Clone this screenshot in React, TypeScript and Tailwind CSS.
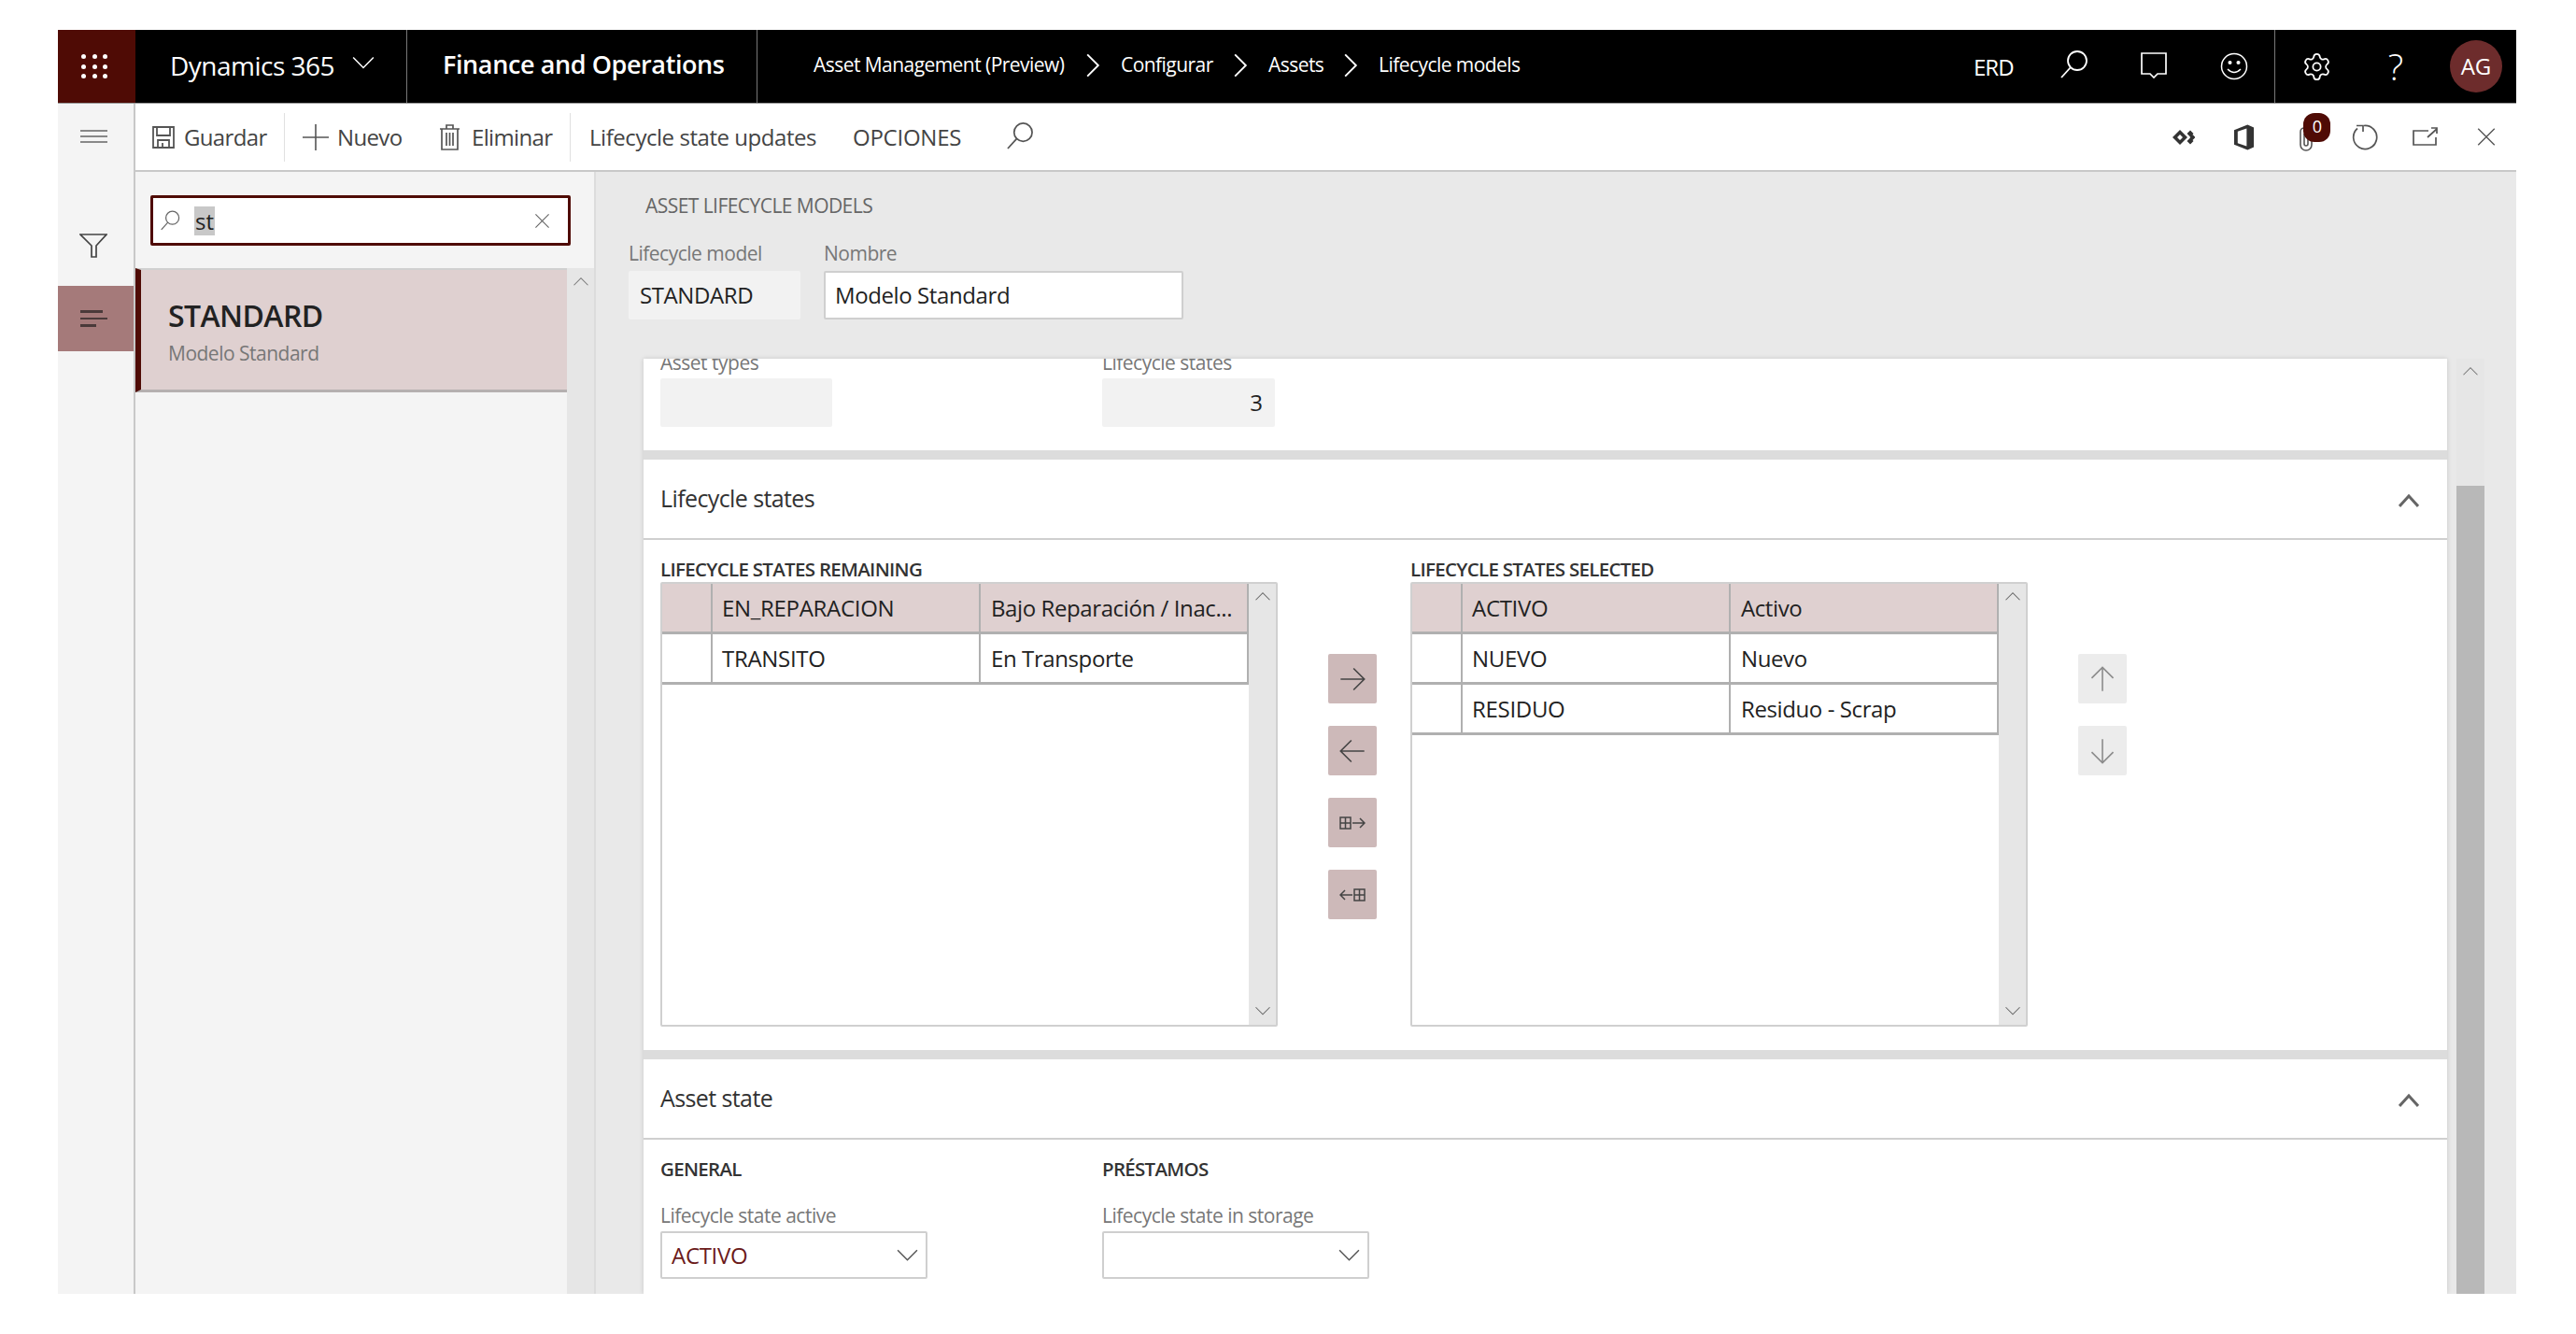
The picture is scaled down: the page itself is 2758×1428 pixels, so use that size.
import React from "react";
import { Settings } from "lucide-react";

type IconProps = { className?: string };

const line = { fill: "none", stroke: "currentColor", strokeWidth: 1.4 };

const Chevron = ({ dir, className, weight }: { dir: "up" | "down" | "right"; className?: string; weight?: number }) => {
  const d = dir === "up" ? "M2 15 L12 5 L22 15" : dir === "down" ? "M2 7 L12 17 L22 7" : "M7 2 L17 12 L7 22";
  return (
    <svg viewBox="0 0 24 24" className={className} {...line} strokeWidth={weight ?? 1.4}>
      <path d={d} />
    </svg>
  );
};

const SearchIcon = ({ className }: IconProps) => (
  <svg viewBox="0 0 30 30" className={className} {...line} strokeWidth={1.8}>
    <circle cx="18" cy="11" r="10" />
    <path d="M11 18 L1 29" />
  </svg>
);

const CloseIcon = ({ className }: IconProps) => (
  <svg viewBox="0 0 24 24" className={className} {...line} strokeWidth={1.6}>
    <path d="M2 2 L22 22 M22 2 L2 22" />
  </svg>
);

const Arrow = ({ dir, className }: { dir: "left" | "right" | "up" | "down"; className?: string }) => {
  const d = {
    right: "M2 13 H24 M14 3 L24 13 L14 23",
    left: "M24 13 H2 M12 3 L2 13 L12 23",
    up: "M13 24 V2 M3 12 L13 2 L23 12",
    down: "M13 2 V24 M3 14 L13 24 L23 14",
  }[dir];
  return (
    <svg viewBox="0 0 26 26" className={className} {...line} strokeWidth={1.4}>
      <path d={d} />
    </svg>
  );
};

const GridArrow = ({ flip }: { flip?: boolean }) => (
  <svg viewBox="0 0 28 16" className="w-[28px] h-[16px] text-[#444]" {...line} strokeWidth={1.5}>
    {flip ? (
      <>
        <path d="M14 8 H1 M6 3 L1 8 L6 13" />
        <path d="M16 2 H27 V14 H16 Z M21.5 2 V14 M16 8 H27" />
      </>
    ) : (
      <>
        <path d="M1 2 H12 V14 H1 Z M6.5 2 V14 M1 8 H12" />
        <path d="M14 8 H27 M22 3 L27 8 L22 13" />
      </>
    )}
  </svg>
);

const GridPanel = ({ title, rows, active }: { title: string; rows: string[][]; active: number }) => (
  <div className="w-[661px] flex flex-col pt-[18px]">
    <div className="h-[27px] text-[20.5px] leading-[27px] font-semibold text-[#333] tracking-[-0.7px] whitespace-nowrap">
      {title}
    </div>
    <div className="h-[476px] border-2 border-[#d0d0d0] rounded-[2px] flex">
      <div className="w-[628px] flex flex-col">
        {rows.map((row, i) => (
          <div
            key={row[0]}
            className={`h-[54px] flex border-b-[3px] border-[#b0b0b0] ${i === active ? "bg-[#dfd0d0]" : "bg-white"}`}
          >
            <div className="w-[54px] border-r-2 border-[#b0b0b0]" />
            <div className="w-[287px] border-r-2 border-[#b0b0b0] pl-[10px] pt-[1px] flex items-center text-[24px] text-[#222] tracking-[-0.3px]">
              {row[0]}
            </div>
            <div className="w-[287px] border-r-2 border-[#b0b0b0] pl-[11px] pt-[1px] flex items-center text-[24px] text-[#222] tracking-[-0.4px] whitespace-nowrap">
              {row[1]}
            </div>
          </div>
        ))}
      </div>
      <div className="flex-1 bg-[#e6e6e6] flex flex-col items-center justify-between py-[6px] text-[#666]">
        <Chevron dir="up" className="w-[18px] h-[18px]" />
        <Chevron dir="down" className="w-[18px] h-[18px]" />
      </div>
    </div>
  </div>
);

const ActionButton = ({ children, disabled }: { children: React.ReactNode; disabled?: boolean }) => (
  <div
    className={`w-[52px] h-[53px] rounded-[2px] flex items-center justify-center ${
      disabled ? "bg-[#ececec] text-[#8c8c8c]" : "bg-[#cdb9b9] text-[#444]"
    }`}
  >
    {children}
  </div>
);

const CardHeader = ({ title }: { title: string }) => (
  <div className="h-[86px] shrink-0 border-b-2 border-[#cfcfcf] pl-[18px] pr-[30px] flex items-center justify-between">
    <span className="text-[25px] font-medium text-[#333] tracking-[-0.6px]">{title}</span>
    <svg viewBox="0 0 22 15" className="w-[22px] h-[15px] text-[#666] mt-[2px]" {...line} strokeWidth={3}>
      <path d="M1 14 L11 3 L21 14" />
    </svg>
  </div>
);

const SelectField = ({ label, group, value }: { label: string; group: string; value?: string }) => (
  <div className="w-[286px]">
    <div className="h-[30px] text-[20.5px] leading-[30px] font-semibold text-[#333] tracking-[-0.7px] whitespace-nowrap">{group}</div>
    <div className="mt-[20px] h-[30px] text-[21px] leading-[30px] text-[#777] tracking-[-0.5px] whitespace-nowrap">{label}</div>
    <div className="mt-[2px] h-[51px] border-2 border-[#cfcfcf] rounded-[2px] bg-white pl-[10px] pr-[7px] flex items-center justify-between text-[24px] text-[#6b1a1a] tracking-[-0.3px]">
      <span>{value}</span>
      <Chevron dir="down" className="w-[25px] h-[25px] text-[#555]" />
    </div>
  </div>
);

export default function App() {
  return (
    <div className="min-h-screen bg-white pt-[32px] pl-[62px] font-['Open_Sans',sans-serif]">
      <div className="w-[2632px] h-[1353px] flex flex-col overflow-hidden">
        {/* top bar */}
        <header className="h-[79px] shrink-0 bg-black border-b border-[#999] text-white flex items-stretch">
          <div className="w-[83px] bg-[#4f0b05] grid grid-cols-[5px_5px_5px] gap-x-[6.5px] gap-y-[5.5px] pl-[25px] pt-[26px] content-start">
            {Array.from({ length: 9 }).map((_, i) => (
              <span key={i} className="w-[5px] h-[5px] rounded-full bg-white" />
            ))}
          </div>
          <div className="w-[291px] border-r border-[#777] pl-[37px] flex items-center">
            <span className="w-[177px] text-[28px] font-medium tracking-[-0.5px] whitespace-nowrap -mt-[3px]">Dynamics 365</span>
            <Chevron dir="down" className="ml-[17px] w-[26px] h-[26px] -mt-[8px]" />
          </div>
          <div className="w-[375px] border-r border-[#777] pl-[38px] flex items-center">
            <span className="text-[27px] font-semibold tracking-[-0.4px] whitespace-nowrap -mt-[3px]">Finance and Operations</span>
          </div>
          <nav className="pl-[60px] flex items-center text-[21px] tracking-[-0.55px] whitespace-nowrap">
            <span className="w-[269px] -mt-[2px]">Asset Management (Preview)</span>
            <Chevron dir="right" className="w-[28px] h-[28px] mx-[16px] -mt-[2px]" weight={1.6} />
            <span className="w-[98px] -mt-[2px]">Configurar</span>
            <Chevron dir="right" className="w-[28px] h-[28px] mx-[16px] -mt-[2px]" weight={1.6} />
            <span className="w-[58px] -mt-[2px]">Assets</span>
            <Chevron dir="right" className="w-[28px] h-[28px] mx-[16px] -mt-[2px]" weight={1.6} />
            <span className="-mt-[2px]">Lifecycle models</span>
          </nav>
          <div className="ml-auto flex items-center">
            <span className="w-[43px] text-[24px] tracking-[-1px] mt-[2px]">ERD</span>
            <SearchIcon className="w-[30px] h-[30px] ml-[50px] -mt-[5px]" />
            <svg viewBox="0 0 28 28" className="w-[28px] h-[28px] ml-[56px] -mt-[2px]" {...line} strokeWidth={1.7}>
              <path d="M1 1 H27 V23 H18 L14 27 L10 23 H1 Z" />
            </svg>
            <svg viewBox="0 0 30 30" className="w-[30px] h-[30px] ml-[57px]" {...line} strokeWidth={1.5}>
              <circle cx="15" cy="15" r="13.5" />
              <circle cx="10.5" cy="11" r="1.3" fill="currentColor" />
              <circle cx="19.5" cy="11" r="1.3" fill="currentColor" />
              <path d="M8 18 Q15 25 22 18" />
            </svg>
            <div className="w-[28px]" />
            <div className="w-[259px] h-full border-l border-[#777] pl-[28px] flex items-center">
              <Settings className="w-[33px] h-[33px]" strokeWidth={1.3} />
              <span className="w-[32px] ml-[52px] text-[39px] font-light text-center leading-none -mt-[2px]">?</span>
              <span className="ml-[42px] w-[56px] h-[56px] rounded-full bg-[#6d2c2c] flex items-center justify-center text-[24px]">AG</span>
            </div>
          </div>
        </header>

        <div className="flex-1 flex min-h-0">
          {/* nav rail */}
          <aside className="w-[83px] shrink-0 bg-[#f4f4f4] border-r-2 border-[#c8c8c8] flex flex-col">
            <div className="mt-[28px] ml-[24px] w-[29px] flex flex-col gap-[4px]">
              <span className="h-[2px] bg-[#888]" />
              <span className="h-[2px] bg-[#888]" />
              <span className="h-[2px] bg-[#888]" />
            </div>
            <svg viewBox="0 0 30 26" className="w-[30px] h-[26px] ml-[23px] mt-[97px] text-[#444]" {...line} strokeWidth={1.7}>
              <path d="M1 1 H29 L18 13 V25 H13 V13 Z" />
            </svg>
            <div className="mt-[30px] h-[70px] bg-[#a57a7a] pl-[24px] flex flex-col justify-center gap-[5px]">
              <span className="h-[2.5px] w-[24px] bg-[#4a3a3a]" />
              <span className="h-[2.5px] w-[29px] bg-[#4a3a3a]" />
              <span className="h-[2.5px] w-[17px] bg-[#4a3a3a]" />
            </div>
          </aside>

          <div className="flex-1 flex flex-col min-w-0">
            {/* action bar */}
            <div className="h-[73px] shrink-0 bg-white border-b-2 border-[#c8c8c8] flex items-center text-[24px] text-[#444] tracking-[-0.65px] whitespace-nowrap">
              <svg viewBox="0 0 24 24" className="w-[24px] h-[24px] ml-[18px] text-[#555]" {...line} strokeWidth={1.8}>
                <path d="M1 1 H23 V23 H1 Z M5 1 V10 H19 V1 M6 23 V15 H18 V23 M11 18 V23" />
              </svg>
              <span className="ml-[10px] w-[87px]">Guardar</span>
              <span className="ml-[20px] w-px h-[52px] bg-[#e0e0e0]" />
              <svg viewBox="0 0 28 28" className="w-[28px] h-[28px] ml-[19px] text-[#555]" {...line} strokeWidth={1.6}>
                <path d="M14 0 V28 M0 14 H28" />
              </svg>
              <span className="ml-[9px] w-[69px]">Nuevo</span>
              <svg viewBox="0 0 21 28" className="w-[21px] h-[28px] ml-[41px] text-[#555]" {...line} strokeWidth={1.7}>
                <path d="M0 5 H21 M7 5 V1 H14 V5 M2 5 V27 H19 V5 M7 9 V23 M10.5 9 V23 M14 9 V23" />
              </svg>
              <span className="ml-[13px] w-[85px]">Eliminar</span>
              <span className="ml-[20px] w-px h-[52px] bg-[#e0e0e0]" />
              <span className="ml-[20px] w-[243px] tracking-[-0.45px]">Lifecycle state updates</span>
              <span className="ml-[39px] w-[116px] tracking-[-0.25px]">OPCIONES</span>
              <SearchIcon className="w-[29px] h-[29px] ml-[49px] -mt-[2px] text-[#555]" />
              <div className="ml-auto flex items-center">
                <svg viewBox="0 0 24 16" className="w-[24px] h-[16px] text-[#333]" fill="currentColor">
                  <path fillRule="evenodd" d="M8 0 L16 8 L8 16 L0 8 Z M8 5 L5 8 L8 11 L11 8 Z" />
                  <path d="M19 0.5 L22.5 4 L19 7.5 L15.5 4 Z M19 8.5 L22.5 12 L19 15.5 L15.5 12 Z M21.5 5 L24.5 8 L21.5 11 L18.5 8 Z" />
                </svg>
                <svg viewBox="0 0 24 28" className="w-[23px] h-[28px] ml-[41px] text-[#333]" fill="currentColor">
                  <path fillRule="evenodd" d="M1 6 L16 0 L23 3 V25 L16 28 L1 22 Z M5 7.5 L15 4 V24 L5 20.5 Z" />
                </svg>
                <div className="relative ml-[47px] w-[16px] h-[27px] mt-[4px]">
                  <svg viewBox="0 0 16 27" className="w-[16px] h-[27px] text-[#555]" {...line} strokeWidth={1.6}>
                    <path d="M14 7 V20 A6 6 0 0 1 2 20 V6 A4 4 0 0 1 10 6 V19 A2 2 0 0 1 6 19 V8" />
                  </svg>
                  <span className="absolute -top-[14px] left-[5px] w-[29px] h-[31px] rounded-[12px] bg-[#4f0b05] text-white text-[18px] leading-[29px] text-center">
                    0
                  </span>
                </div>
                <svg viewBox="0 0 28 28" className="w-[28px] h-[28px] ml-[41px] text-[#555]" {...line} strokeWidth={1.7}>
                  <path d="M13 1.5 A12.5 12.5 0 1 1 6 4.5 M5 1.5 H12 V8" />
                </svg>
                <svg viewBox="0 0 27 21" className="w-[27px] h-[21px] ml-[37px] text-[#555]" {...line} strokeWidth={1.7}>
                  <path d="M17 4 H1 V19 H25 V11 M16 11 L26 2 M20 1 H26 V7" />
                </svg>
                <CloseIcon className="w-[22px] h-[21px] ml-[41px] mr-[21px] text-[#555]" />
              </div>
            </div>

            <div className="flex-1 flex min-h-0">
              {/* list pane */}
              <section className="w-[493px] shrink-0 bg-[#f4f4f4] border-r-2 border-[#dcdcdc] flex flex-col">
                <div className="h-[103px] shrink-0 pl-[16px] pt-[25px]">
                  <div className="w-[450px] h-[54px] border-[3px] border-[#4f0b05] rounded-[2px] bg-white flex items-center pl-[8px] pr-[19px]">
                    <SearchIcon className="w-[21px] h-[24px] text-[#666]" />
                    <span className="ml-[15px] h-[31px] px-[1px] bg-[#c8c8c8] text-[24px] leading-[31px] text-[#222]">st</span>
                    <CloseIcon className="ml-auto w-[17px] h-[17px] text-[#666]" />
                  </div>
                </div>
                <div className="flex-1 flex min-h-0">
                  <div className="w-[462px]">
                    <div className="h-[133px] bg-[#dfd0d0] border-l-[6px] border-l-[#4f0b05] border-b-[3px] border-b-[#b5b0b0] border-t-2 border-t-[#d0d0d0] pl-[29px] pt-[4px] flex flex-col justify-center">
                      <div className="text-[32px] leading-[40px] font-semibold text-[#222] tracking-[-0.6px]">STANDARD</div>
                      <div className="mt-[6px] text-[21px] leading-[28px] text-[#777] tracking-[-0.5px]">Modelo Standard</div>
                    </div>
                  </div>
                  <div className="flex-1 bg-[#e6e6e6] pt-[7px] flex justify-center text-[#777]">
                    <Chevron dir="up" className="w-[18px] h-[18px]" />
                  </div>
                </div>
              </section>

              {/* form */}
              <main className="flex-1 min-w-0 bg-[#e9e9e9] flex flex-col">
                <div className="h-[200px] shrink-0">
                  <div className="pl-[53px] pt-[22px] text-[21px] leading-[28px] text-[#666] tracking-[-0.55px]">ASSET LIFECYCLE MODELS</div>
                  <div className="mt-[22px] pl-[35px] flex gap-[25px]">
                    <div>
                      <div className="h-[30px] text-[21px] leading-[30px] text-[#777] tracking-[-0.5px]">Lifecycle model</div>
                      <div className="mt-[4px] w-[184px] h-[52px] rounded-[2px] bg-[#f2f2f2] pl-[12px] flex items-center text-[24px] text-[#222] tracking-[-0.4px]">
                        STANDARD
                      </div>
                    </div>
                    <div>
                      <div className="h-[30px] text-[21px] leading-[30px] text-[#777] tracking-[-0.5px]">Nombre</div>
                      <div className="mt-[4px] w-[385px] h-[52px] rounded-[2px] bg-white border-2 border-[#cfcfcf] pl-[10px] flex items-center text-[24px] text-[#222] tracking-[-0.4px]">
                        Modelo Standard
                      </div>
                    </div>
                  </div>
                </div>

                <div className="flex-1 flex min-h-0 pl-[51px]">
                  <div className="w-[1931px] bg-[#dcdcdc] flex flex-col gap-[10px] overflow-hidden shadow-[0_0_5px_rgba(0,0,0,0.15)]">
                    <div className="h-[98px] shrink-0 bg-white overflow-hidden pl-[18px] flex">
                      <div className="w-[473px]">
                        <div className="-mt-[10px] h-[28px] text-[21px] leading-[28px] text-[#777] tracking-[-0.5px]">Asset types</div>
                        <div className="mt-[3px] w-[184px] h-[52px] rounded-[2px] bg-[#f2f2f2]" />
                      </div>
                      <div>
                        <div className="-mt-[10px] h-[28px] text-[21px] leading-[28px] text-[#777] tracking-[-0.5px]">Lifecycle states</div>
                        <div className="mt-[3px] w-[185px] h-[52px] rounded-[2px] bg-[#f2f2f2] pr-[13px] flex items-center justify-end text-[24px] text-[#222]">
                          3
                        </div>
                      </div>
                    </div>

                    <div className="h-[632px] shrink-0 bg-white flex flex-col">
                      <CardHeader title="Lifecycle states" />
                      <div className="pl-[18px] flex items-start">
                        <GridPanel
                          title="LIFECYCLE STATES REMAINING"
                          active={0}
                          rows={[
                            ["EN_REPARACION", "Bajo Reparación / Inac..."],
                            ["TRANSITO", "En Transporte"],
                          ]}
                        />
                        <div className="ml-[54px] mt-[122px] flex flex-col gap-[24px]">
                          <ActionButton>
                            <Arrow dir="right" className="w-[30px] h-[30px]" />
                          </ActionButton>
                          <ActionButton>
                            <Arrow dir="left" className="w-[30px] h-[30px]" />
                          </ActionButton>
                          <ActionButton>
                            <GridArrow />
                          </ActionButton>
                          <ActionButton>
                            <GridArrow flip />
                          </ActionButton>
                        </div>
                        <div className="ml-[36px]">
                          <GridPanel
                            title="LIFECYCLE STATES SELECTED"
                            active={0}
                            rows={[
                              ["ACTIVO", "Activo"],
                              ["NUEVO", "Nuevo"],
                              ["RESIDUO", "Residuo - Scrap"],
                            ]}
                          />
                        </div>
                        <div className="ml-[54px] mt-[122px] flex flex-col gap-[24px]">
                          <ActionButton disabled>
                            <Arrow dir="up" className="w-[30px] h-[30px]" />
                          </ActionButton>
                          <ActionButton disabled>
                            <Arrow dir="down" className="w-[30px] h-[30px]" />
                          </ActionButton>
                        </div>
                      </div>
                    </div>

                    <div className="flex-1 bg-white flex flex-col">
                      <CardHeader title="Asset state" />
                      <div className="pl-[18px] pt-[16px] flex gap-[187px]">
                        <SelectField group="GENERAL" label="Lifecycle state active" value="ACTIVO" />
                        <SelectField group="PRÉSTAMOS" label="Lifecycle state in storage" />
                      </div>
                    </div>
                  </div>

                  <div className="ml-[10px] w-[30px] bg-[#e6e6e6] flex flex-col">
                    <div className="h-[136px] pt-[6px] flex justify-center text-[#777]">
                      <Chevron dir="up" className="w-[18px] h-[18px]" />
                    </div>
                    <div className="flex-1 bg-[#b8b8b8]" />
                  </div>
                </div>
              </main>
            </div>
          </div>
        </div>
      </div>
    </div>
  );
}
